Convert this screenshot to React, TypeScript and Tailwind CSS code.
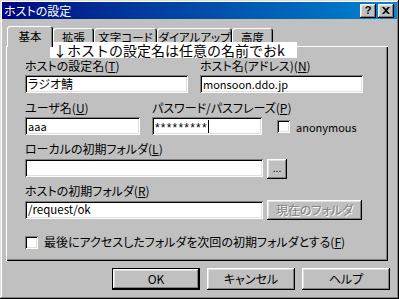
import React from 'react';

// Win98 bevels
const raised = 'shadow-[inset_-1px_-1px_0_#000,inset_1px_1px_0_#fff,inset_-2px_-2px_0_#808080,inset_2px_2px_0_#dfdfdf]';
const sunken = 'shadow-[inset_1px_1px_0_#808080,inset_-1px_-1px_0_#fff,inset_2px_2px_0_#000,inset_-2px_-2px_0_#dfdfdf]';

const Key: React.FC<{ k: string }> = ({ k }) => (
  <>
    (<u>{k}</u>)
  </>
);

const Label: React.FC<{ children: React.ReactNode }> = ({ children }) => (
  <span className="whitespace-nowrap h-[14px]">{children}</span>
);

const Field: React.FC<{ w: string; children?: React.ReactNode }> = ({ w, children }) => (
  <div className={`${w} h-[18px] bg-white ${sunken} pl-[3px] flex items-center leading-none whitespace-nowrap`}>
    {children}
  </div>
);

const Check: React.FC = () => (
  <div className={`w-[13px] h-[13px] bg-white shrink-0 ${sunken}`} />
);

const Tab: React.FC<{ label: string; w: string; active?: boolean }> = ({ label, w, active }) => (
  <div
    className={`${w} ${
      active ? 'h-[21px] -mb-[1px] z-10 pt-[3px]' : 'h-[18px] pt-[2px]'
    } relative shrink-0 bg-[#c0c0c0] rounded-t-[3px] shadow-[inset_1px_1px_0_#fff,inset_-1px_0_0_#000,inset_-2px_0_0_#808080] flex justify-center text-[11.5px] leading-[14px] whitespace-nowrap`}
  >
    {label}
  </div>
);

const Button: React.FC<{ w: string; children: React.ReactNode; isDefault?: boolean; disabled?: boolean; className?: string }> = ({
  w,
  children,
  isDefault,
  disabled,
  className = '',
}) => (
  <div
    className={`${w} shrink-0 flex items-center justify-center bg-[#c0c0c0] whitespace-nowrap ${
      isDefault ? 'border border-black' : ''
    } ${raised} ${disabled ? 'text-[#808080] [text-shadow:1px_1px_0_#fff]' : ''} ${className}`}
  >
    {children}
  </div>
);

export default function App() {
  return (
    <div className="w-[399px] h-[299px] relative bg-[#c0c0c0] p-[2px] flex flex-col text-[12px] text-black font-['Noto_Sans_CJK_JP','Noto_Sans',sans-serif] [font-feature-settings:'palt'] shadow-[inset_-1px_-1px_0_#000,inset_1px_1px_0_#dfdfdf,inset_-2px_-2px_0_#808080,inset_2px_2px_0_#fff] overflow-hidden">
      {/* Title bar */}
      <div className="h-[17px] bg-gradient-to-r from-[#000080] to-[#1084d0] flex items-center pl-[2px] pr-[3px]">
        <span className="flex-1 text-white leading-none">ホストの設定</span>
        <div className={`w-[16px] h-[14px] bg-[#c0c0c0] ${raised} flex items-center justify-center font-['Liberation_Sans',sans-serif] font-bold text-[11px] leading-none`}>
          ?
        </div>
        <div className={`w-[16px] h-[14px] ml-[2px] bg-[#c0c0c0] ${raised} flex items-center justify-center`}>
          <svg width="8" height="7" viewBox="0 0 8 7">
            <path d="M0 0h2l2 2 2-2h2L5 3.5 8 7H6L4 5 2 7H0l3-3.5z" fill="#000" />
          </svg>
        </div>
      </div>

      {/* Tabs */}
      <div className="mt-[7px] pl-[5px] h-[20px] flex items-end">
        <Tab label="基本" w="w-[46px]" active />
        <Tab label="拡張" w="w-[41px]" />
        <Tab label="文字コード" w="w-[63px]" />
        <Tab label="ダイアルアップ" w="w-[75px]" />
        <Tab label="高度" w="w-[41px]" />
      </div>

      {/* Tab panel */}
      <div className="ml-[4px] w-[382px] h-[215px] shadow-[inset_1px_1px_0_#fff,inset_-1px_-1px_0_#000,inset_-2px_-2px_0_#808080] pl-[19px] pt-[13px] flex flex-col leading-[14px]">
        <div className="flex gap-[12px]">
          <div className="flex flex-col gap-[2px]">
            <Label>ホストの設定名<Key k="T" /></Label>
            <Field w="w-[163px]">ラジオ鯖</Field>
          </div>
          <div className="flex flex-col gap-[2px]">
            <Label>ホスト名(アドレス)<Key k="N" /></Label>
            <Field w="w-[163px]">
              <span className="text-[11px]">monsoon.ddo.jp</span>
            </Field>
          </div>
        </div>

        <div className="flex mt-[8px] items-end">
          <div className="w-[115px] flex flex-col gap-[2px]">
            <Label>ユーザ名<Key k="U" /></Label>
            <Field w="w-[115px]">
              <span className="text-[11px]">aaa</span>
            </Field>
          </div>
          <div className="w-[110px] flex flex-col gap-[2px] ml-[12px]">
            <Label>パスワード/パスフレーズ<Key k="P" /></Label>
            <Field w="w-[110px]">
              <span className="font-['Liberation_Sans',sans-serif] text-[12px] tracking-[1.2px] pt-[3px]">*********</span>
              <span className="w-[1px] h-[13px] bg-black" />
            </Field>
          </div>
          <div className="flex items-center ml-[15px] h-[18px] pt-[1px]">
            <Check />
            <span className="ml-[6px] text-[11px]">anonymous</span>
          </div>
        </div>

        <div className="flex flex-col mt-[7px]">
          <Label>ローカルの初期フォルダ<Key k="L" /></Label>
          <div className="flex mt-[3px] gap-[4px] items-start">
            <Field w="w-[238px]" />
            <Button w="w-[20px] h-[20px]" className="text-[10px] leading-none pb-[2px]">
              ...
            </Button>
          </div>
        </div>

        <div className="flex flex-col mt-[5px]">
          <Label>ホストの初期フォルダ<Key k="R" /></Label>
          <div className="flex mt-[3px] gap-[4px] items-start">
            <Field w="w-[238px]">
              <span className="text-[11.5px]">/request/ok</span>
            </Field>
            <Button w="w-[95px] h-[20px]" disabled className="-mt-[1px]">
              現在のフォルダ
            </Button>
          </div>
        </div>

        <div className="flex items-center mt-[15px]">
          <Check />
          <span className="ml-[6px] whitespace-nowrap">
            最後にアクセスしたフォルダを次回の初期フォルダとする<Key k="F" />
          </span>
        </div>
      </div>

      {/* Dialog buttons */}
      <div className="mt-[7px] flex justify-end gap-[7px] pr-[7px]">
        <Button w="w-[88px] h-[22px]" isDefault>
          OK
        </Button>
        <Button w="w-[88px] h-[22px]">キャンセル</Button>
        <Button w="w-[88px] h-[22px]">ヘルプ</Button>
      </div>

      {/* Annotation pasted over the dialog */}
      <div className="absolute left-[50px] top-[42px] w-[247px] h-[16px] bg-white pl-[3px] text-[14px] leading-[16px] whitespace-nowrap [font-feature-settings:normal]">
        ↓ホストの設定名は任意の名前でおk
      </div>
    </div>
  );
}
